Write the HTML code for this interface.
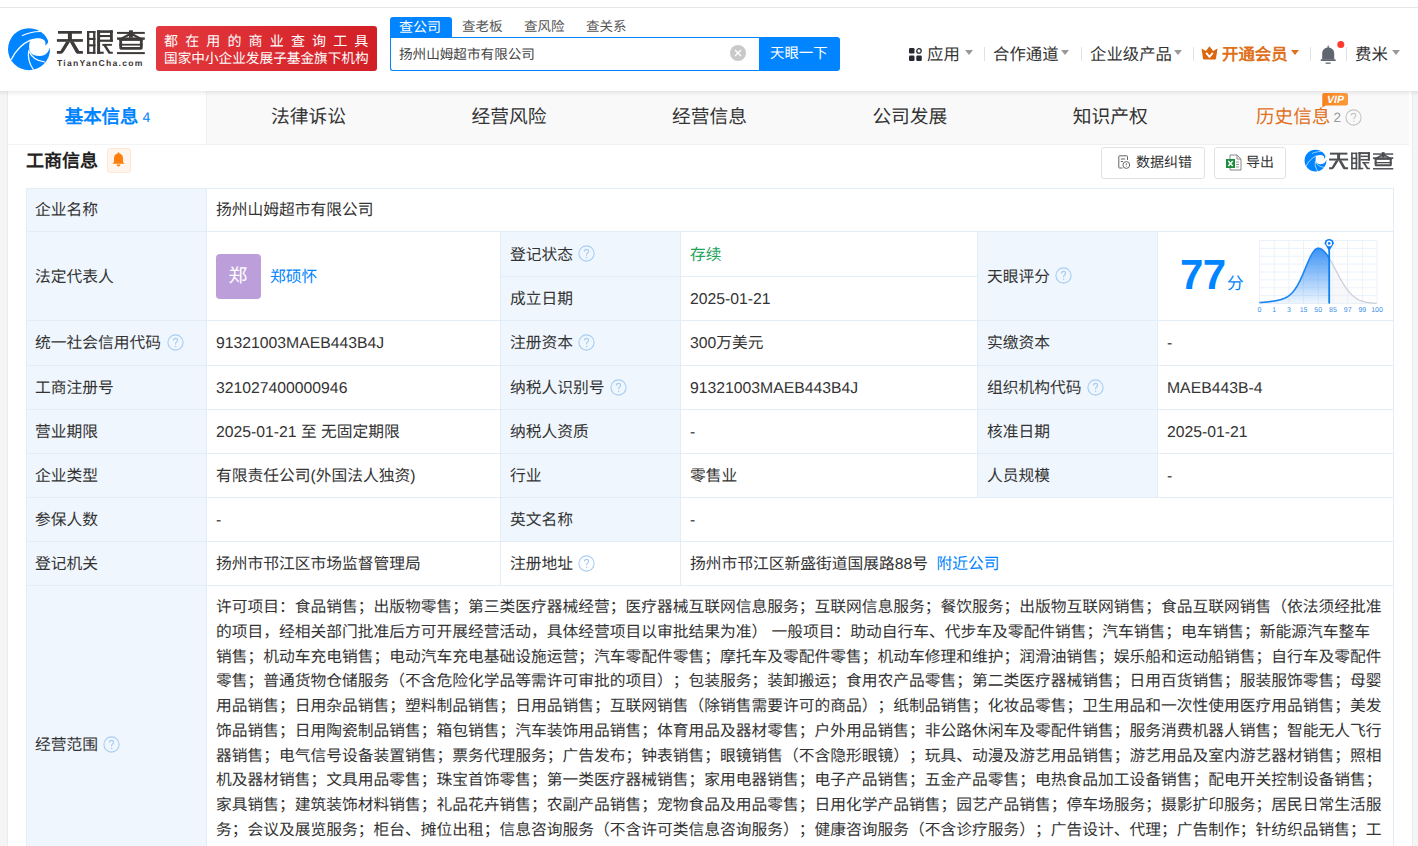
<!DOCTYPE html>
<html lang="zh-CN">
<head>
<meta charset="utf-8">
<style>
*{box-sizing:border-box;margin:0;padding:0}
html,body{width:1418px;height:846px;overflow:hidden;background:#fff}
body{position:relative;font-family:"Liberation Sans",sans-serif;color:#333;text-rendering:geometricPrecision;text-spacing-trim:space-all;font-weight:350}
.a{position:absolute;white-space:nowrap}
.ln{position:absolute;background:#e3edf7}
.lb{position:absolute;background:#eff6fd}
.q{position:absolute;width:16px;height:16px}
.t{font-size:15.75px;line-height:20px;color:#333}
.tri{position:absolute;width:0;height:0;border-left:4px solid transparent;border-right:4px solid transparent;border-top:5px solid #9a9a9a}
.sep{position:absolute;width:1px;height:14px;background:#dde3ea;top:47px}
</style>
</head>
<body>
<svg width="0" height="0" style="position:absolute"><defs><symbol id="lt" viewBox="0 0 96 32"><g fill="currentColor">
  <rect x="4" y="5" width="23.9" height="2.7"/>
  <rect x="13.9" y="6" width="4" height="9"/>
  <rect x="2.9" y="13.1" width="26" height="2.7"/>
  <polygon points="12.2,15.5 16.2,15.5 9.6,26 7.6,27.8 2.9,27.8 2.9,25.1 6.4,25.1"/>
  <polygon points="15.6,15.5 19.6,15.5 25.2,25.1 28.9,25.1 28.9,27.8 23.2,27.8 21.9,26.8"/>
  <rect x="33" y="5" width="2.3" height="22.8"/>
  <rect x="39.1" y="5" width="2.3" height="22.8"/>
  <rect x="33" y="5" width="8.4" height="1.9"/>
  <rect x="33" y="25.9" width="8.4" height="1.9"/>
  <rect x="33" y="11.9" width="8.4" height="2.1"/>
  <rect x="33" y="18.3" width="8.4" height="2.1"/>
  <rect x="43.1" y="4.3" width="3" height="23.5"/>
  <rect x="43.1" y="4.3" width="15.7" height="2.6"/>
  <rect x="56" y="4.3" width="2.8" height="11.5"/>
  <rect x="46" y="9" width="10" height="2.1"/>
  <rect x="46" y="13.6" width="12.8" height="2.2"/>
  <rect x="43.1" y="25.7" width="6.6" height="2.1"/>
  <rect x="48.4" y="17.9" width="9.5" height="1.9"/>
  <polygon points="48.4,17.9 51.3,17.9 56.3,25.7 58.8,25.7 58.8,27.8 54.6,27.8"/>
  <rect x="63" y="5.9" width="27.8" height="2"/>
  <rect x="75" y="4.3" width="3.9" height="7.3"/>
  <polygon points="75.6,7 78.2,8.6 67.2,13.6 63.6,13.6"/>
  <polygon points="78.3,7 75.7,8.6 86.7,13.6 90.3,13.6"/>
  <rect x="63" y="11.4" width="27.8" height="2.3"/>
  <rect x="65.3" y="13" width="23.4" height="1.9"/>
  <path d="M65.3 13 H68.1 V21 H85.9 V13 H88.7 V22 Q88.7 23.8 86.9 23.8 H67.1 Q65.3 23.8 65.3 22 Z"/>
  <rect x="65.3" y="17.8" width="23.4" height="1.8"/>
  <rect x="63" y="26.1" width="27.8" height="2"/>
 </g></symbol><symbol id="lg" viewBox="0 0 48 48">
  <circle cx="24" cy="24.2" r="21" fill="#0084ff"/>
  <path d="M35 6.3 C39.5 8 43 11.5 43.2 16 C43.3 18 42 19.5 40.3 20.4 L47 23 L48 0 L30 0 Z" fill="#fff"/>
  <path d="M17 10.8 C22 8.2 29 6.6 35.2 6.5" fill="none" stroke="#fff" stroke-width="1.1"/>
  <path d="M25.5 14.8 C30 13 36 12.6 39 15 C40.5 16.3 40.8 18.5 40.3 20.4 L47.5 20.5 L47.5 23.5 L44.9 22.9 C43 27.5 41 29.8 36.5 30.8 C33 31.4 29.5 30.8 27.3 29.3 C25 27.5 24 25 24.1 21.5 C24.2 19 24.7 16.5 25.5 14.8 Z" fill="#fff"/>
  <path d="M6.2 34.8 C10 26.5 16.5 19 25.8 14.8" fill="none" stroke="#fff" stroke-width="1.3"/>
  <path d="M24 25 C22.8 30 23 37 28.6 45" fill="none" stroke="#fff" stroke-width="1.3"/>
  <path d="M24.4 26.7 C26.5 32 31.5 36 40 37" fill="none" stroke="#fff" stroke-width="1.2"/>
 </symbol></defs></svg>
<!-- top line -->
<div class="a" style="left:0;top:7px;width:1418px;height:1px;background:#e6e6e6"></div>

<!-- page gray sides -->
<div class="a" style="left:0;top:91px;width:8px;height:755px;background:#f5f5f5;border-right:1px solid #ececec"></div>
<div class="a" style="left:1412px;top:91px;width:6px;height:755px;background:#f5f5f5;border-left:1px solid #ececec"></div>

<!-- HEADER -->
<div id="hdr">
 <!-- logo -->
<svg class="a" style="left:5px;top:25px" width="48" height="48"><use href="#lg"/></svg>
<svg class="a" style="left:54px;top:26px;color:#3e3a39" width="96" height="32"><use href="#lt"/></svg>
 <div class="a" style="left:57px;top:57px;font-size:8.6px;line-height:12px;font-weight:bold;color:#3e3a39;letter-spacing:1.25px">TianYanCha.com</div>
 <!-- red banner -->
 <div class="a" style="left:156px;top:26px;width:221px;height:45px;border-radius:3px;background:linear-gradient(90deg,#e3393e,#d21f26)"></div>
 <div class="a" style="left:164px;top:32px;font-size:14px;line-height:18px;color:#fff;letter-spacing:7.15px;font-weight:500">都在用的商业查询工具</div>
 <div class="a" style="left:164px;top:50px;font-size:13.65px;line-height:18px;color:#fff;font-weight:500">国家中小企业发展子基金旗下机构</div>

 <!-- search tabs -->
 <div class="a" style="left:390px;top:17px;width:62px;height:21px;background:#0084ff;border-radius:3px 3px 0 0"></div>
 <div class="a" style="left:399px;top:17px;font-size:14px;line-height:20px;color:#fff;font-weight:500">查公司</div>
 <div class="a" style="left:462px;top:17px;font-size:13.5px;line-height:20px;color:#555">查老板</div>
 <div class="a" style="left:524px;top:17px;font-size:13.5px;line-height:20px;color:#555">查风险</div>
 <div class="a" style="left:586px;top:17px;font-size:13.5px;line-height:20px;color:#555">查关系</div>
 <!-- search box -->
 <div class="a" style="left:390px;top:37px;width:370px;height:34px;border:1px solid #0084ff;border-right:none;border-radius:0 0 0 3px"></div>
 <div class="a" style="left:399px;top:45px;font-size:13.6px;line-height:20px;color:#444">扬州山姆超市有限公司</div>
 <svg class="a" style="left:730px;top:45px" width="16" height="16" viewBox="0 0 16 16"><circle cx="8" cy="8" r="8" fill="#c9c9c9"/><path d="M5 5 L11 11 M11 5 L5 11" stroke="#fff" stroke-width="1.4"/></svg>
 <div class="a" style="left:759px;top:37px;width:81px;height:34px;background:#0084ff;border-radius:0 3px 3px 0"></div>
 <div class="a" style="left:770px;top:44px;font-size:14.4px;line-height:20px;color:#fff;font-weight:400">天眼一下</div>

 <!-- right nav -->
 <svg class="a" style="left:909px;top:48px" width="13" height="13" viewBox="0 0 13 13">
  <rect x="0" y="0" width="5.5" height="5.5" rx="1.2" fill="#262a30"/>
  <circle cx="10" cy="2.9" r="2.2" fill="none" stroke="#262a30" stroke-width="1.3"/>
  <rect x="0" y="7.5" width="5.5" height="5.5" rx="1.2" fill="#262a30"/>
  <rect x="7.3" y="7.5" width="5.5" height="5.5" rx="1.2" fill="#262a30"/>
 </svg>
 <div class="a" style="left:927px;top:45px;font-size:16.4px;line-height:20px;color:#333">应用</div>
 <div class="tri" style="left:965px;top:50px"></div>
 <div class="sep" style="left:984px"></div>
 <div class="a" style="left:993px;top:45px;font-size:16.4px;line-height:20px;color:#333">合作通道</div>
 <div class="tri" style="left:1061px;top:50px"></div>
 <div class="sep" style="left:1081px"></div>
 <div class="a" style="left:1090px;top:45px;font-size:16.4px;line-height:20px;color:#333">企业级产品</div>
 <div class="tri" style="left:1174px;top:50px"></div>
 <div class="sep" style="left:1193px"></div>
 <svg class="a" style="left:1201px;top:46px" width="17" height="14" viewBox="0 0 17 14">
  <path d="M0.5 2.5 L4.8 5 L8.5 0.3 L12.2 5 L16.5 2.5 L15 12.5 Q14.8 13.5 13.8 13.5 L3.2 13.5 Q2.2 13.5 2 12.5 Z" fill="#da660f"/>
  <path d="M5.2 6.8 L8.5 10.8 L11.8 6.8" fill="none" stroke="#fff" stroke-width="1.9"/>
 </svg>
 <div class="a" style="left:1222px;top:45px;font-size:16.4px;line-height:20px;color:#e0701b;font-weight:bold">开通会员</div>
 <div class="tri" style="left:1291px;top:50px;border-top-color:#e0701b"></div>
 <div class="sep" style="left:1310px"></div>
 <svg class="a" style="left:1320px;top:45px" width="17" height="19" viewBox="0 0 17 19">
  <rect x="7.6" y="0.6" width="1.2" height="3" fill="#5f6670"/>
  <path d="M2.2 14.6 L2.2 8.6 C2.2 5 4.8 2.6 8.2 2.6 C11.6 2.6 14.2 5 14.2 8.6 L14.2 14.6 Z" fill="#5f6670"/>
  <rect x="0.6" y="14.3" width="15.2" height="1.6" rx="0.6" fill="#5f6670"/>
  <rect x="5.6" y="17.5" width="5" height="1.3" fill="#5f6670"/>
 </svg>
 <svg class="a" style="left:1337px;top:41px" width="8" height="8"><circle cx="3.8" cy="3.6" r="3.5" fill="#ff3a30"/></svg>
 <div class="sep" style="left:1346px"></div>
 <div class="a" style="left:1355px;top:45px;font-size:16.4px;line-height:20px;color:#333">费米</div>
 <div class="tri" style="left:1392px;top:50px"></div>
</div>

<!-- TAB BAR -->
<div class="a" style="left:8px;top:91px;width:1401px;height:54px;background:#f9f9f9;border-bottom:1px solid #f0f0f0"></div>
<div class="a" style="left:8px;top:91px;width:199px;height:54px;background:#fff;border-right:1px solid #f0f0f0;border-bottom:1px solid #f3f3f3"></div>
<div class="a" style="left:0;top:91px;width:1418px;height:5px;background:linear-gradient(rgba(0,0,0,0.075),rgba(0,0,0,0))"></div>


<div class="a" style="left:8px;top:102px;width:199px;text-align:center;font-size:18.4px;line-height:30px;color:#0084ff;font-weight:bold">基本信息<span style="font-weight:normal;font-size:14px;margin-left:4px;position:relative;top:-1.5px">4</span></div>
<div class="a" style="left:208.4px;top:102px;width:200.4px;text-align:center;font-size:18.75px;line-height:30px;color:#333">法律诉讼</div>
<div class="a" style="left:408.9px;top:102px;width:200.4px;text-align:center;font-size:18.75px;line-height:30px;color:#333">经营风险</div>
<div class="a" style="left:609.3px;top:102px;width:200.4px;text-align:center;font-size:18.75px;line-height:30px;color:#333">经营信息</div>
<div class="a" style="left:809.7px;top:102px;width:200.4px;text-align:center;font-size:18.75px;line-height:30px;color:#333">公司发展</div>
<div class="a" style="left:1010.1px;top:102px;width:200.4px;text-align:center;font-size:18.75px;line-height:30px;color:#333">知识产权</div>
<div class="a" style="left:1256px;top:102px;font-size:18.6px;line-height:30px;color:#e0701b">历史信息<span style="font-size:13.5px;color:#999;margin-left:3px;position:relative;top:-1px">2</span></div>
<svg class="a" style="left:1345px;top:109px" width="17" height="17" viewBox="0 0 17 17"><circle cx="8.5" cy="8.5" r="7.6" fill="none" stroke="#c4c4c4" stroke-width="1.1"/><path d="M6.2 6.6 C6.2 5.2 7.2 4.4 8.5 4.4 C9.8 4.4 10.8 5.2 10.8 6.4 C10.8 7.8 8.9 8 8.9 9.6 L8.9 10.3" fill="none" stroke="#c4c4c4" stroke-width="1.1"/><circle cx="8.9" cy="12.4" r="0.7" fill="#c4c4c4"/></svg>
<svg class="a" style="left:1322px;top:93px" width="26" height="15" viewBox="0 0 26 15"><defs><linearGradient id="vg" x1="0" x2="1"><stop offset="0" stop-color="#f7811c"/><stop offset="1" stop-color="#fb9a3c"/></linearGradient></defs><path d="M2 0 H24 Q26 0 26 2 V10.5 Q26 12.5 24 12.5 H4 L0.3 14.5 L0.3 2 Q0.3 0 2 0 Z" fill="url(#vg)"/><text x="13.5" y="10.3" text-anchor="middle" font-family="Liberation Sans" font-weight="bold" font-style="italic" font-size="10.5" fill="#fff">VIP</text></svg>
<div class="a" style="left:26px;top:148px;font-size:18px;line-height:26px;font-weight:bold;color:#222">工商信息</div>
<div class="a" style="left:107px;top:148px;width:24px;height:25px;background:#fff5ec;border:1px solid #ffe7d4;border-radius:3px"></div>
<svg class="a" style="left:112px;top:152px" width="13" height="15" viewBox="0 0 13 15"><path d="M6.5 0.5 C7.2 0.5 7.5 1 7.5 1.4 C10 2 11 4 11 6.5 L11 10 L12.6 11.8 L0.4 11.8 L2 10 L2 6.5 C2 4 3 2 5.5 1.4 C5.5 1 5.8 0.5 6.5 0.5 Z" fill="#ff7d0b"/><path d="M4.6 12.6 H8.4 C8.2 13.8 7.5 14.5 6.5 14.5 C5.5 14.5 4.8 13.8 4.6 12.6 Z" fill="#ff7d0b"/></svg>
<div class="a" style="left:1101px;top:147px;width:104px;height:32px;border:1px solid #e2e2e2;border-radius:3px"></div>
<svg class="a" style="left:1118px;top:155px" width="13" height="14" viewBox="0 0 13 14"><path d="M9.5 5 V1.5 Q9.5 0.8 8.8 0.8 H1.5 Q0.8 0.8 0.8 1.5 V12.3 Q0.8 13 1.5 13 H4.5" fill="none" stroke="#666" stroke-width="1"/><path d="M2.8 4 H7.2 M2.8 6.5 H5" stroke="#666" stroke-width="1"/><circle cx="8.3" cy="10" r="3.4" fill="none" stroke="#666" stroke-width="1"/><path d="M8.3 8.3 V10.2 M8.3 11.3 V11.8" stroke="#666" stroke-width="1"/></svg>
<div class="a" style="left:1136px;top:151px;font-size:14px;line-height:22px;color:#333">数据纠错</div>
<div class="a" style="left:1214px;top:147px;width:72px;height:32px;border:1px solid #e2e2e2;border-radius:3px"></div>
<svg class="a" style="left:1226px;top:154px" width="16" height="17" viewBox="0 0 16 17"><path d="M4 1 H11 L15 5 V16 H4 Z" fill="#fff" stroke="#888" stroke-width="1"/><path d="M11 1 V5 H15" fill="none" stroke="#888" stroke-width="1"/><path d="M10 8 H13 M10 10.5 H13 M10 13 H13" stroke="#999" stroke-width="1"/><rect x="0" y="5" width="9" height="9" fill="#1e8e3e"/><path d="M2.3 7 L6.7 12 M6.7 7 L2.3 12" stroke="#fff" stroke-width="1.4"/></svg>
<div class="a" style="left:1246px;top:151px;font-size:14px;line-height:22px;color:#333">导出</div>
<svg class="a" style="left:1302.5px;top:148px" width="25" height="25" viewBox="0 0 48 48"><use href="#lg"/></svg>
<svg class="a" style="left:1327.2px;top:148.9px;color:#4d4e53" width="70.08" height="23.36" viewBox="0 0 96 32"><use href="#lt"/></svg>
<div class="lb" style="left:26px;top:188px;width:180px;height:712px"></div>
<div class="lb" style="left:500px;top:231px;width:180px;height:310px"></div>
<div class="lb" style="left:977px;top:231px;width:180px;height:266px"></div>
<div class="ln" style="left:26px;top:188px;width:1368px;height:1px"></div>
<div class="ln" style="left:26px;top:231px;width:1368px;height:1px"></div>
<div class="ln" style="left:500px;top:276px;width:478px;height:1px"></div>
<div class="ln" style="left:26px;top:320px;width:1368px;height:1px"></div>
<div class="ln" style="left:26px;top:365px;width:1368px;height:1px"></div>
<div class="ln" style="left:26px;top:409px;width:1368px;height:1px"></div>
<div class="ln" style="left:26px;top:453px;width:1368px;height:1px"></div>
<div class="ln" style="left:26px;top:497px;width:1368px;height:1px"></div>
<div class="ln" style="left:26px;top:541px;width:1368px;height:1px"></div>
<div class="ln" style="left:26px;top:585px;width:1368px;height:1px"></div>
<div class="ln" style="left:26px;top:188px;width:1px;height:713px"></div>
<div class="ln" style="left:1393px;top:188px;width:1px;height:713px"></div>
<div class="ln" style="left:206px;top:188px;width:1px;height:713px"></div>
<div class="ln" style="left:500px;top:231px;width:1px;height:355px"></div>
<div class="ln" style="left:680px;top:231px;width:1px;height:355px"></div>
<div class="ln" style="left:977px;top:231px;width:1px;height:267px"></div>
<div class="ln" style="left:1157px;top:231px;width:1px;height:267px"></div>
<div class="a t" style="left:35px;top:201px;">企业名称</div>
<div class="a t" style="left:216px;top:201px;">扬州山姆超市有限公司</div>
<div class="a t" style="left:35px;top:268px;">法定代表人</div>
<div class="a" style="left:216px;top:254px;width:45px;height:45px;background:#bc9edb;border-radius:4px;color:#fff;font-size:18.8px;line-height:44px;text-align:center;text-indent:-1px">郑</div>
<div class="a t" style="left:270px;top:268px;color:#0084ff">郑硕怀</div>
<div class="a t" style="left:510px;top:246px;">登记状态</div>
<svg class="a" style="left:578px;top:244.5px" width="17" height="17" viewBox="0 0 17 17"><circle cx="8.5" cy="8.5" r="7.6" fill="none" stroke="#a8cdf2" stroke-width="1.1"/><path d="M6.4 6.5 C6.4 5.2 7.3 4.4 8.5 4.4 C9.7 4.4 10.6 5.2 10.6 6.3 C10.6 7.7 8.6 7.9 8.6 9.7 L8.6 10.5" fill="none" stroke="#a8cdf2" stroke-width="1.1"/><circle cx="8.6" cy="12.5" r="0.75" fill="#a8cdf2"/></svg>
<div class="a t" style="left:690px;top:246px;color:#22a35a">存续</div>
<div class="a t" style="left:510px;top:290px;">成立日期</div>
<div class="a t" style="left:690px;top:290px;">2025-01-21</div>
<div class="a t" style="left:987px;top:268px;">天眼评分</div>
<svg class="a" style="left:1055px;top:266.5px" width="17" height="17" viewBox="0 0 17 17"><circle cx="8.5" cy="8.5" r="7.6" fill="none" stroke="#a8cdf2" stroke-width="1.1"/><path d="M6.4 6.5 C6.4 5.2 7.3 4.4 8.5 4.4 C9.7 4.4 10.6 5.2 10.6 6.3 C10.6 7.7 8.6 7.9 8.6 9.7 L8.6 10.5" fill="none" stroke="#a8cdf2" stroke-width="1.1"/><circle cx="8.6" cy="12.5" r="0.75" fill="#a8cdf2"/></svg>
<div class="a t" style="left:35px;top:334px;">统一社会信用代码</div>
<svg class="a" style="left:167px;top:333.5px" width="17" height="17" viewBox="0 0 17 17"><circle cx="8.5" cy="8.5" r="7.6" fill="none" stroke="#a8cdf2" stroke-width="1.1"/><path d="M6.4 6.5 C6.4 5.2 7.3 4.4 8.5 4.4 C9.7 4.4 10.6 5.2 10.6 6.3 C10.6 7.7 8.6 7.9 8.6 9.7 L8.6 10.5" fill="none" stroke="#a8cdf2" stroke-width="1.1"/><circle cx="8.6" cy="12.5" r="0.75" fill="#a8cdf2"/></svg>
<div class="a t" style="left:216px;top:334px;">91321003MAEB443B4J</div>
<div class="a t" style="left:510px;top:334px;">注册资本</div>
<svg class="a" style="left:578px;top:333.5px" width="17" height="17" viewBox="0 0 17 17"><circle cx="8.5" cy="8.5" r="7.6" fill="none" stroke="#a8cdf2" stroke-width="1.1"/><path d="M6.4 6.5 C6.4 5.2 7.3 4.4 8.5 4.4 C9.7 4.4 10.6 5.2 10.6 6.3 C10.6 7.7 8.6 7.9 8.6 9.7 L8.6 10.5" fill="none" stroke="#a8cdf2" stroke-width="1.1"/><circle cx="8.6" cy="12.5" r="0.75" fill="#a8cdf2"/></svg>
<div class="a t" style="left:690px;top:334px;">300万美元</div>
<div class="a t" style="left:987px;top:334px;">实缴资本</div>
<div class="a t" style="left:1167px;top:334px;">-</div>
<div class="a t" style="left:35px;top:379px;">工商注册号</div>
<div class="a t" style="left:216px;top:379px;">321027400000946</div>
<div class="a t" style="left:510px;top:379px;">纳税人识别号</div>
<svg class="a" style="left:610px;top:378.5px" width="17" height="17" viewBox="0 0 17 17"><circle cx="8.5" cy="8.5" r="7.6" fill="none" stroke="#a8cdf2" stroke-width="1.1"/><path d="M6.4 6.5 C6.4 5.2 7.3 4.4 8.5 4.4 C9.7 4.4 10.6 5.2 10.6 6.3 C10.6 7.7 8.6 7.9 8.6 9.7 L8.6 10.5" fill="none" stroke="#a8cdf2" stroke-width="1.1"/><circle cx="8.6" cy="12.5" r="0.75" fill="#a8cdf2"/></svg>
<div class="a t" style="left:690px;top:379px;">91321003MAEB443B4J</div>
<div class="a t" style="left:987px;top:379px;">组织机构代码</div>
<svg class="a" style="left:1087px;top:378.5px" width="17" height="17" viewBox="0 0 17 17"><circle cx="8.5" cy="8.5" r="7.6" fill="none" stroke="#a8cdf2" stroke-width="1.1"/><path d="M6.4 6.5 C6.4 5.2 7.3 4.4 8.5 4.4 C9.7 4.4 10.6 5.2 10.6 6.3 C10.6 7.7 8.6 7.9 8.6 9.7 L8.6 10.5" fill="none" stroke="#a8cdf2" stroke-width="1.1"/><circle cx="8.6" cy="12.5" r="0.75" fill="#a8cdf2"/></svg>
<div class="a t" style="left:1167px;top:379px;">MAEB443B-4</div>
<div class="a t" style="left:35px;top:423px;">营业期限</div>
<div class="a t" style="left:216px;top:423px;">2025-01-21 至 无固定期限</div>
<div class="a t" style="left:510px;top:423px;">纳税人资质</div>
<div class="a t" style="left:690px;top:423px;">-</div>
<div class="a t" style="left:987px;top:423px;">核准日期</div>
<div class="a t" style="left:1167px;top:423px;">2025-01-21</div>
<div class="a t" style="left:35px;top:467px;">企业类型</div>
<div class="a t" style="left:216px;top:467px;">有限责任公司(外国法人独资)</div>
<div class="a t" style="left:510px;top:467px;">行业</div>
<div class="a t" style="left:690px;top:467px;">零售业</div>
<div class="a t" style="left:987px;top:467px;">人员规模</div>
<div class="a t" style="left:1167px;top:467px;">-</div>
<div class="a t" style="left:35px;top:511px;">参保人数</div>
<div class="a t" style="left:216px;top:511px;">-</div>
<div class="a t" style="left:510px;top:511px;">英文名称</div>
<div class="a t" style="left:690px;top:511px;">-</div>
<div class="a t" style="left:35px;top:555px;">登记机关</div>
<div class="a t" style="left:216px;top:555px;">扬州市邗江区市场监督管理局</div>
<div class="a t" style="left:510px;top:555px;">注册地址</div>
<svg class="a" style="left:578px;top:554.5px" width="17" height="17" viewBox="0 0 17 17"><circle cx="8.5" cy="8.5" r="7.6" fill="none" stroke="#a8cdf2" stroke-width="1.1"/><path d="M6.4 6.5 C6.4 5.2 7.3 4.4 8.5 4.4 C9.7 4.4 10.6 5.2 10.6 6.3 C10.6 7.7 8.6 7.9 8.6 9.7 L8.6 10.5" fill="none" stroke="#a8cdf2" stroke-width="1.1"/><circle cx="8.6" cy="12.5" r="0.75" fill="#a8cdf2"/></svg>
<div class="a t" style="left:690px;top:555px;">扬州市邗江区新盛街道国展路88号 <span style="color:#0084ff;margin-left:4px">附近公司</span></div>
<div class="a t" style="left:35px;top:736px;">经营范围</div>
<svg class="a" style="left:103px;top:735.5px" width="17" height="17" viewBox="0 0 17 17"><circle cx="8.5" cy="8.5" r="7.6" fill="none" stroke="#a8cdf2" stroke-width="1.1"/><path d="M6.4 6.5 C6.4 5.2 7.3 4.4 8.5 4.4 C9.7 4.4 10.6 5.2 10.6 6.3 C10.6 7.7 8.6 7.9 8.6 9.7 L8.6 10.5" fill="none" stroke="#a8cdf2" stroke-width="1.1"/><circle cx="8.6" cy="12.5" r="0.75" fill="#a8cdf2"/></svg>
<div class="a t" style="left:216px;top:598.0px;">许可项目：食品销售；出版物零售；第三类医疗器械经营；医疗器械互联网信息服务；互联网信息服务；餐饮服务；出版物互联网销售；食品互联网销售（依法须经批准</div>
<div class="a t" style="left:216px;top:622.75px;">的项目，经相关部门批准后方可开展经营活动，具体经营项目以审批结果为准） 一般项目：助动自行车、代步车及零配件销售；汽车销售；电车销售；新能源汽车整车</div>
<div class="a t" style="left:216px;top:647.5px;">销售；机动车充电销售；电动汽车充电基础设施运营；汽车零配件零售；摩托车及零配件零售；机动车修理和维护；润滑油销售；娱乐船和运动船销售；自行车及零配件</div>
<div class="a t" style="left:216px;top:672.25px;">零售；普通货物仓储服务（不含危险化学品等需许可审批的项目）；包装服务；装卸搬运；食用农产品零售；第二类医疗器械销售；日用百货销售；服装服饰零售；母婴</div>
<div class="a t" style="left:216px;top:697.0px;">用品销售；日用杂品销售；塑料制品销售；日用品销售；互联网销售（除销售需要许可的商品）；纸制品销售；化妆品零售；卫生用品和一次性使用医疗用品销售；美发</div>
<div class="a t" style="left:216px;top:721.75px;">饰品销售；日用陶瓷制品销售；箱包销售；汽车装饰用品销售；体育用品及器材零售；户外用品销售；非公路休闲车及零配件销售；服务消费机器人销售；智能无人飞行</div>
<div class="a t" style="left:216px;top:746.5px;">器销售；电气信号设备装置销售；票务代理服务；广告发布；钟表销售；眼镜销售（不含隐形眼镜）；玩具、动漫及游艺用品销售；游艺用品及室内游艺器材销售；照相</div>
<div class="a t" style="left:216px;top:771.25px;">机及器材销售；文具用品零售；珠宝首饰零售；第一类医疗器械销售；家用电器销售；电子产品销售；五金产品零售；电热食品加工设备销售；配电开关控制设备销售；</div>
<div class="a t" style="left:216px;top:796.0px;">家具销售；建筑装饰材料销售；礼品花卉销售；农副产品销售；宠物食品及用品零售；日用化学产品销售；园艺产品销售；停车场服务；摄影扩印服务；居民日常生活服</div>
<div class="a t" style="left:216px;top:820.75px;">务；会议及展览服务；柜台、摊位出租；信息咨询服务（不含许可类信息咨询服务）；健康咨询服务（不含诊疗服务）；广告设计、代理；广告制作；针纺织品销售；工</div>
<div class="a" style="left:1180px;top:251px;font-size:42px;letter-spacing:-0.5px;line-height:48px;font-weight:bold;color:#0084ff">77</div>
<div class="a" style="left:1227px;top:274px;font-size:16.6px;line-height:20px;color:#0084ff">分</div>
<svg class="a" style="left:1255px;top:234px" width="130" height="82" viewBox="0 0 130 82"><defs><linearGradient id="cg" x1="0" y1="0" x2="0" y2="1"><stop offset="0" stop-color="#3d93f6"/><stop offset="1" stop-color="#3d93f6" stop-opacity="0.08"/></linearGradient></defs><line x1="4.50" y1="6.50" x2="4.50" y2="69.50" stroke="#ebf2fa" stroke-width="1"/><line x1="19.19" y1="6.50" x2="19.19" y2="69.50" stroke="#ebf2fa" stroke-width="1"/><line x1="33.88" y1="6.50" x2="33.88" y2="69.50" stroke="#ebf2fa" stroke-width="1"/><line x1="48.57" y1="6.50" x2="48.57" y2="69.50" stroke="#ebf2fa" stroke-width="1"/><line x1="63.26" y1="6.50" x2="63.26" y2="69.50" stroke="#ebf2fa" stroke-width="1"/><line x1="77.95" y1="6.50" x2="77.95" y2="69.50" stroke="#ebf2fa" stroke-width="1"/><line x1="92.64" y1="6.50" x2="92.64" y2="69.50" stroke="#ebf2fa" stroke-width="1"/><line x1="107.33" y1="6.50" x2="107.33" y2="69.50" stroke="#ebf2fa" stroke-width="1"/><line x1="122.02" y1="6.50" x2="122.02" y2="69.50" stroke="#ebf2fa" stroke-width="1"/><line x1="4.50" y1="6.50" x2="122.00" y2="6.50" stroke="#ebf2fa" stroke-width="1"/><line x1="4.50" y1="14.38" x2="122.00" y2="14.38" stroke="#ebf2fa" stroke-width="1"/><line x1="4.50" y1="22.25" x2="122.00" y2="22.25" stroke="#ebf2fa" stroke-width="1"/><line x1="4.50" y1="30.12" x2="122.00" y2="30.12" stroke="#ebf2fa" stroke-width="1"/><line x1="4.50" y1="38.00" x2="122.00" y2="38.00" stroke="#ebf2fa" stroke-width="1"/><line x1="4.50" y1="45.88" x2="122.00" y2="45.88" stroke="#ebf2fa" stroke-width="1"/><line x1="4.50" y1="53.75" x2="122.00" y2="53.75" stroke="#ebf2fa" stroke-width="1"/><line x1="4.50" y1="61.62" x2="122.00" y2="61.62" stroke="#ebf2fa" stroke-width="1"/><line x1="4.50" y1="69.50" x2="122.00" y2="69.50" stroke="#ebf2fa" stroke-width="1"/><polygon points="4.50,69.50 4.50,68.58 5.00,68.54 5.50,68.51 6.00,68.47 6.50,68.43 7.00,68.39 7.50,68.35 8.00,68.31 8.50,68.27 9.00,68.22 9.50,68.18 10.00,68.13 10.50,68.08 11.00,68.04 11.50,67.99 12.00,67.93 12.50,67.88 13.00,67.83 13.50,67.77 14.00,67.71 14.50,67.65 15.00,67.59 15.50,67.53 16.00,67.46 16.50,67.40 17.00,67.33 17.50,67.26 18.00,67.18 18.50,67.11 19.00,67.03 19.50,66.95 20.00,66.86 20.50,66.77 21.00,66.68 21.50,66.59 22.00,66.49 22.50,66.39 23.00,66.28 23.50,66.17 24.00,66.05 24.50,65.93 25.00,65.80 25.50,65.66 26.00,65.51 26.50,65.36 27.00,65.20 27.50,65.03 28.00,64.85 28.50,64.66 29.00,64.46 29.50,64.25 30.00,64.02 30.50,63.78 31.00,63.53 31.50,63.25 32.00,62.97 32.50,62.66 33.00,62.34 33.50,61.99 34.00,61.63 34.50,61.24 35.00,60.83 35.50,60.40 36.00,59.94 36.50,59.45 37.00,58.94 37.50,58.40 38.00,57.83 38.50,57.23 39.00,56.60 39.50,55.94 40.00,55.24 40.50,54.52 41.00,53.76 41.50,52.97 42.00,52.15 42.50,51.29 43.00,50.40 43.50,49.48 44.00,48.53 44.50,47.55 45.00,46.54 45.50,45.50 46.00,44.44 46.50,43.35 47.00,42.24 47.50,41.10 48.00,39.95 48.50,38.79 49.00,37.61 49.50,36.42 50.00,35.22 50.50,34.03 51.00,32.83 51.50,31.63 52.00,30.45 52.50,29.28 53.00,28.12 53.50,26.98 54.00,25.87 54.50,24.78 55.00,23.73 55.50,22.72 56.00,21.74 56.50,20.81 57.00,19.93 57.50,19.10 58.00,18.33 58.50,17.62 59.00,16.97 59.50,16.38 60.00,15.87 60.50,15.42 61.00,15.05 61.50,14.75 62.00,14.52 62.50,14.38 63.00,14.31 63.50,14.31 64.00,14.36 64.50,14.45 65.00,14.59 65.50,14.77 66.00,15.00 66.50,15.27 67.00,15.59 67.50,15.94 68.00,16.34 68.50,16.77 69.00,17.25 69.50,17.76 70.00,18.31 70.50,18.90 71.00,19.52 71.50,20.17 72.00,20.86 72.50,21.57 73.00,22.31 73.50,23.08 74.00,23.87 74.20,24.20 74.20,69.50" fill="url(#cg)"/><polygon points="74.20,69.50 74.20,24.20 74.70,25.02 75.20,25.86 75.70,26.73 76.20,27.61 76.70,28.51 77.20,29.42 77.70,30.34 78.20,31.27 78.70,32.21 79.20,33.16 79.70,34.11 80.20,35.06 80.70,36.02 81.20,36.98 81.70,37.93 82.20,38.88 82.70,39.83 83.20,40.77 83.70,41.71 84.20,42.63 84.70,43.55 85.20,44.45 85.70,45.35 86.20,46.23 86.70,47.09 87.20,47.95 87.70,48.78 88.20,49.60 88.70,50.41 89.20,51.19 89.70,51.96 90.20,52.71 90.70,53.44 91.20,54.15 91.70,54.84 92.20,55.52 92.70,56.17 93.20,56.80 93.70,57.41 94.20,58.00 94.70,58.58 95.20,59.13 95.70,59.66 96.20,60.17 96.70,60.67 97.20,61.14 97.70,61.59 98.20,62.03 98.70,62.45 99.20,62.85 99.70,63.23 100.20,63.59 100.70,63.94 101.20,64.28 101.70,64.59 102.20,64.89 102.70,65.18 103.20,65.45 103.70,65.71 104.20,65.95 104.70,66.18 105.20,66.40 105.70,66.61 106.20,66.80 106.70,66.99 107.20,67.16 107.70,67.32 108.20,67.48 108.70,67.62 109.20,67.76 109.70,67.88 110.20,68.00 110.70,68.11 111.20,68.22 111.70,68.31 112.20,68.40 112.70,68.49 113.20,68.57 113.70,68.64 114.20,68.71 114.70,68.77 115.20,68.83 115.70,68.89 116.20,68.94 116.70,68.98 117.20,69.03 117.70,69.07 118.20,69.10 118.70,69.14 119.20,69.17 119.70,69.20 120.20,69.23 120.70,69.25 121.20,69.27 121.70,69.29 122.00,69.50" fill="#eef0f5" fill-opacity="0.45"/><polyline points="4.50,68.58 5.00,68.54 5.50,68.51 6.00,68.47 6.50,68.43 7.00,68.39 7.50,68.35 8.00,68.31 8.50,68.27 9.00,68.22 9.50,68.18 10.00,68.13 10.50,68.08 11.00,68.04 11.50,67.99 12.00,67.93 12.50,67.88 13.00,67.83 13.50,67.77 14.00,67.71 14.50,67.65 15.00,67.59 15.50,67.53 16.00,67.46 16.50,67.40 17.00,67.33 17.50,67.26 18.00,67.18 18.50,67.11 19.00,67.03 19.50,66.95 20.00,66.86 20.50,66.77 21.00,66.68 21.50,66.59 22.00,66.49 22.50,66.39 23.00,66.28 23.50,66.17 24.00,66.05 24.50,65.93 25.00,65.80 25.50,65.66 26.00,65.51 26.50,65.36 27.00,65.20 27.50,65.03 28.00,64.85 28.50,64.66 29.00,64.46 29.50,64.25 30.00,64.02 30.50,63.78 31.00,63.53 31.50,63.25 32.00,62.97 32.50,62.66 33.00,62.34 33.50,61.99 34.00,61.63 34.50,61.24 35.00,60.83 35.50,60.40 36.00,59.94 36.50,59.45 37.00,58.94 37.50,58.40 38.00,57.83 38.50,57.23 39.00,56.60 39.50,55.94 40.00,55.24 40.50,54.52 41.00,53.76 41.50,52.97 42.00,52.15 42.50,51.29 43.00,50.40 43.50,49.48 44.00,48.53 44.50,47.55 45.00,46.54 45.50,45.50 46.00,44.44 46.50,43.35 47.00,42.24 47.50,41.10 48.00,39.95 48.50,38.79 49.00,37.61 49.50,36.42 50.00,35.22 50.50,34.03 51.00,32.83 51.50,31.63 52.00,30.45 52.50,29.28 53.00,28.12 53.50,26.98 54.00,25.87 54.50,24.78 55.00,23.73 55.50,22.72 56.00,21.74 56.50,20.81 57.00,19.93 57.50,19.10 58.00,18.33 58.50,17.62 59.00,16.97 59.50,16.38 60.00,15.87 60.50,15.42 61.00,15.05 61.50,14.75 62.00,14.52 62.50,14.38 63.00,14.31 63.50,14.31 64.00,14.36 64.50,14.45 65.00,14.59 65.50,14.77 66.00,15.00 66.50,15.27 67.00,15.59 67.50,15.94 68.00,16.34 68.50,16.77 69.00,17.25 69.50,17.76 70.00,18.31 70.50,18.90 71.00,19.52 71.50,20.17 72.00,20.86 72.50,21.57 73.00,22.31 73.50,23.08 74.00,23.87 74.20,24.20" fill="none" stroke="#1a84f2" stroke-width="1.6"/><polyline points="74.20,24.20 74.70,25.02 75.20,25.86 75.70,26.73 76.20,27.61 76.70,28.51 77.20,29.42 77.70,30.34 78.20,31.27 78.70,32.21 79.20,33.16 79.70,34.11 80.20,35.06 80.70,36.02 81.20,36.98 81.70,37.93 82.20,38.88 82.70,39.83 83.20,40.77 83.70,41.71 84.20,42.63 84.70,43.55 85.20,44.45 85.70,45.35 86.20,46.23 86.70,47.09 87.20,47.95 87.70,48.78 88.20,49.60 88.70,50.41 89.20,51.19 89.70,51.96 90.20,52.71 90.70,53.44 91.20,54.15 91.70,54.84 92.20,55.52 92.70,56.17 93.20,56.80 93.70,57.41 94.20,58.00 94.70,58.58 95.20,59.13 95.70,59.66 96.20,60.17 96.70,60.67 97.20,61.14 97.70,61.59 98.20,62.03 98.70,62.45 99.20,62.85 99.70,63.23 100.20,63.59 100.70,63.94 101.20,64.28 101.70,64.59 102.20,64.89 102.70,65.18 103.20,65.45 103.70,65.71 104.20,65.95 104.70,66.18 105.20,66.40 105.70,66.61 106.20,66.80 106.70,66.99 107.20,67.16 107.70,67.32 108.20,67.48 108.70,67.62 109.20,67.76 109.70,67.88 110.20,68.00 110.70,68.11 111.20,68.22 111.70,68.31 112.20,68.40 112.70,68.49 113.20,68.57 113.70,68.64 114.20,68.71 114.70,68.77 115.20,68.83 115.70,68.89 116.20,68.94 116.70,68.98 117.20,69.03 117.70,69.07 118.20,69.10 118.70,69.14 119.20,69.17 119.70,69.20 120.20,69.23 120.70,69.25 121.20,69.27 121.70,69.29" fill="none" stroke="#c9ccd8" stroke-width="1.2"/><line x1="74.20" y1="13.00" x2="74.20" y2="69.50" stroke="#0a7ef2" stroke-width="1.8"/><path d="M69.60,9.60 A4.6,4.6 0 1 1 78.80,9.60 L74.20,17.00 Z" fill="#0a7ef2"/><circle cx="74.20" cy="9.40" r="2.8" fill="#fff"/><circle cx="74.20" cy="9.40" r="1.3" fill="#0a7ef2"/><text x="4.50" y="78.00" text-anchor="middle" font-family="Liberation Sans" font-size="7" fill="#3d8fe8">0</text><text x="19.19" y="78.00" text-anchor="middle" font-family="Liberation Sans" font-size="7" fill="#3d8fe8">1</text><text x="33.88" y="78.00" text-anchor="middle" font-family="Liberation Sans" font-size="7" fill="#3d8fe8">3</text><text x="48.57" y="78.00" text-anchor="middle" font-family="Liberation Sans" font-size="7" fill="#3d8fe8">15</text><text x="63.26" y="78.00" text-anchor="middle" font-family="Liberation Sans" font-size="7" fill="#3d8fe8">50</text><text x="77.95" y="78.00" text-anchor="middle" font-family="Liberation Sans" font-size="7" fill="#3d8fe8">85</text><text x="92.64" y="78.00" text-anchor="middle" font-family="Liberation Sans" font-size="7" fill="#3d8fe8">97</text><text x="107.33" y="78.00" text-anchor="middle" font-family="Liberation Sans" font-size="7" fill="#3d8fe8">99</text><text x="122.02" y="78.00" text-anchor="middle" font-family="Liberation Sans" font-size="7" fill="#3d8fe8">100</text></svg>
</body></html>
